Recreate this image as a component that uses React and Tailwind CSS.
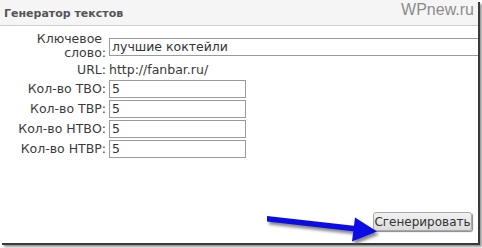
import React from 'react';

const rows = [
  { label: 'Кол-во ТВО:', value: '5' },
  { label: 'Кол-во ТВР:', value: '5' },
  { label: 'Кол-во НТВО:', value: '5' },
  { label: 'Кол-во НТВР:', value: '5' },
];

const Arrow = () => (
  <svg className="absolute left-[260px] top-[205px]" width="125" height="43" viewBox="0 0 125 43">
    <defs>
      <filter id="blur" x="-10%" y="-30%" width="130%" height="160%">
        <feGaussianBlur stdDeviation="1.5" />
      </filter>
    </defs>
    <g transform="translate(2,3)" filter="url(#blur)" fill="#6b6b6b" opacity="0.8">
      <polygon points="7,11 96,21 95,26.5 7,16.5" />
      <polygon points="95,12.5 117,26.5 92,36.5" />
    </g>
    <g fill="#0c0ce6">
      <polygon points="7,11 96,21 95,26.5 7,16.5" />
      <polygon points="95,12.5 117,26.5 92,36.5" />
    </g>
  </svg>
);

const App = () => {
  return (
    <div className="relative w-[482px] h-[248px] bg-white overflow-hidden font-['DejaVu_Sans',Verdana,sans-serif]">
      <div className="relative w-[478px] h-[243px] bg-white overflow-hidden shadow-[2px_2px_0_#3a3a3a,4px_4px_2px_#9a9a9a]">
        {/* Header */}
        <div className="h-[26px] bg-[#f5f5f5] border-b border-[#cfcfcf] flex items-start justify-between">
          <h2 className="pl-[4px] pt-[7px] text-[11px] leading-[13px] font-bold text-[#555]">Генератор текстов</h2>
          <span className="pr-[4px] pt-[1px] text-[16px] leading-[18px] text-[#8c8c8c] font-['Liberation_Sans',Arial,sans-serif]">WPnew.ru</span>
        </div>

        {/* Form */}
        <div className="pt-[6px] text-[12.5px] text-[#3a3a3a]">
          <div className="flex items-start h-[29px]">
            <div className="w-[106px] shrink-0 text-right leading-[14px]">
              <span className="mr-[4px]">Ключевое</span><br />слово:
            </div>
            <div className="ml-[3px] mt-[6px] w-[400px] h-[18px] shrink-0 border border-[#9a9a9a] bg-white pl-[2px] leading-[16px] text-[#333]">
              лучшие коктейли
            </div>
          </div>
          <div className="flex items-center h-[18px]">
            <div className="w-[106px] shrink-0 text-right leading-[14px]">URL:</div>
            <div className="ml-[3px] leading-[14px]">http://fanbar.ru/</div>
          </div>
          {rows.map((r) => (
            <div key={r.label} className="flex items-center h-[20px]">
              <div className="w-[106px] shrink-0 text-right leading-[14px]">{r.label}</div>
              <div className="ml-[3px] w-[137px] h-[18px] border border-[#9a9a9a] bg-white pl-[2px] leading-[16px] text-[#333]">
                {r.value}
              </div>
            </div>
          ))}
        </div>

        {/* Button */}
        <div className="flex justify-end pr-[6px] mt-[53px]">
          <button className="h-[19px] w-[99px] rounded-[3px] border border-[#a8a8a8] bg-gradient-to-b from-[#f2f2f2] to-[#dcdcdc] text-[12px] leading-[16px] text-[#333] shadow-[1px_1px_1px_#888]">
            Сгенерировать
          </button>
        </div>
      </div>
      <Arrow />
    </div>
  );
};

export default App;
